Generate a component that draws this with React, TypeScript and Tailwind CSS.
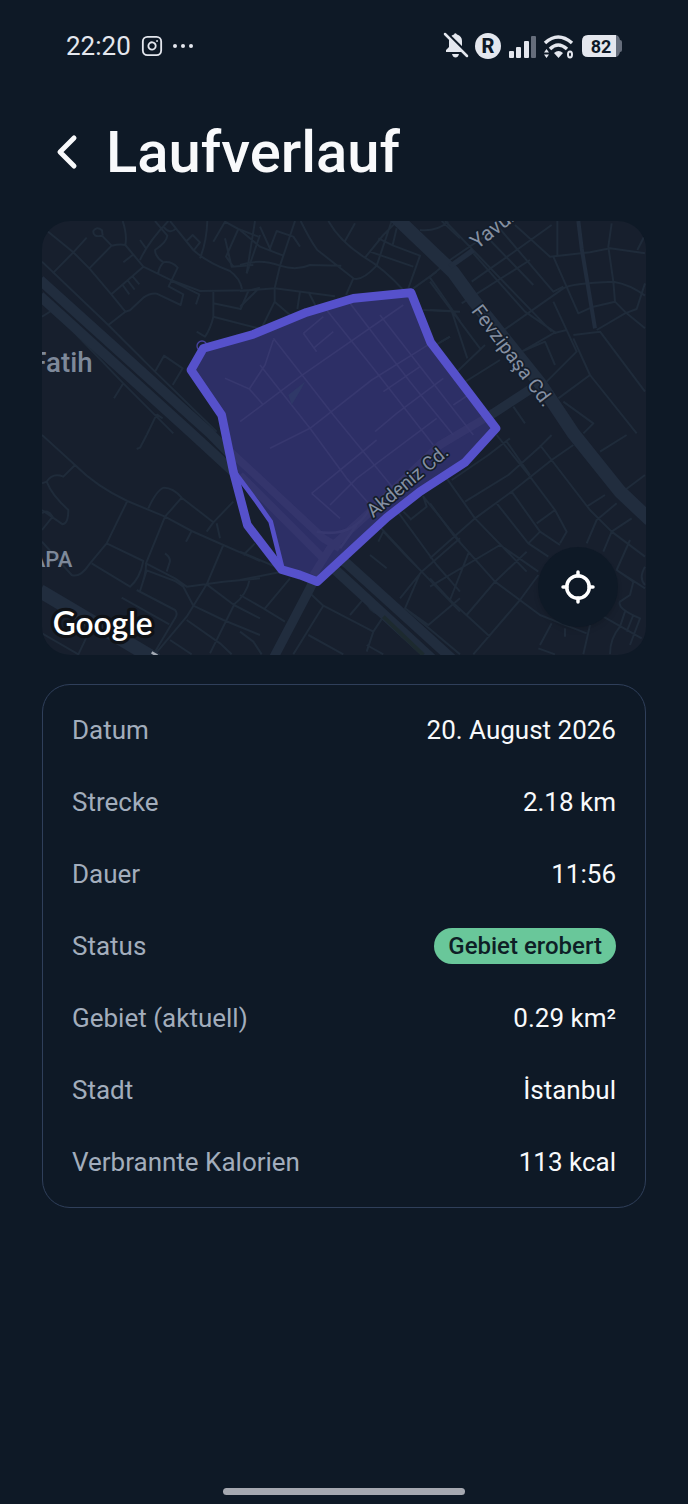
import type { ReactNode } from 'react';
import { Instagram } from 'lucide-react';

type Detail = {
  label: string;
  value: string;
  badge?: boolean;
};

const details: Detail[] = [
  { label: 'Datum', value: '20. August 2026' },
  { label: 'Strecke', value: '2.18 km' },
  { label: 'Dauer', value: '11:56' },
  { label: 'Status', value: 'Gebiet erobert', badge: true },
  { label: 'Gebiet (aktuell)', value: '0.29 km²' },
  { label: 'Stadt', value: 'İstanbul' },
  { label: 'Verbrannte Kalorien', value: '113 kcal' },
];

// Side streets, one path per map tile
const tiles = [
  {
    x: 0,
    y: 0,
    d: 'M18 45L100 112L148 160L214 238L256 290M38 175L100 112L140 68M148 160L215 92Q240 86 256 90Q262 60 248 18M215 92L186 62Q158 68 160 48Q170 32 186 46L188 62M256 90L310 155L390 194L480 228L630 226L660 218M300 135Q325 80 385 18M300 75L318 100M250 142L278 120M345 18L382 62Q380 82 345 105Q345 125 370 142Q355 160 355 175M370 142Q395 138 413 158L386 214L430 238L422 270L350 236Q330 234 310 248L270 286L256 290L205 330M214 238L310 155M248 210L268 238M262 195L284 224M276 182L298 208M392 196L478 238L468 268M390 18L460 105Q500 142 570 168Q600 190 606 222M440 78L458 60L480 82L462 105M480 130Q500 80 502 18M370 35Q390 60 408 40M520 80L555 20L595 42L655 65M555 70L575 155L640 150M595 42L558 125L580 155M660 60L620 175M520 230V305L655 340M520 265L602 282L625 228M520 305Q512 340 495 365L470 350M345 470L372 422L428 460L398 510M6 140L205 330L345 470L530 650M6 305L38 285M38 285L250 505L400 655M250 505L222 550M350 598L320 660M350 598L368 610',
  },
  {
    x: 600,
    y: 0,
    d: 'M0 150Q60 130 120 152Q170 168 210 150L304 152M45 18L20 175M0 45L60 95L130 122M60 35L92 105M90 100L110 48L160 65L180 95M165 18L120 152L104 220V260M0 228L104 220L285 244M0 275L55 222M104 260L62 345M104 260L150 300M62 345L100 370L68 450L25 520L0 505M182 18Q210 75 232 105L340 190Q365 200 410 152L455 18M265 18Q300 80 375 128Q430 160 490 225M345 25L315 78M340 190L318 240M375 128L430 60L470 20M415 70L460 92L540 122L505 220M390 110L520 155M470 40L458 90M180 230L172 282M205 230L230 278M540 45Q590 50 625 20M520 220L590 170M570 188L660 318M550 285L660 290M600 382L630 365M605 18L660 70',
  },
  {
    x: 1170,
    y: 0,
    d: 'M0 185L60 135L170 60M45 18L365 350M125 200L260 105L365 30M95 265L300 135M215 350L400 220Q420 205 550 200Q600 208 645 242M200 30L370 230L400 215M255 30L360 125L480 112L540 100L645 115M382 18V120M370 125L445 295L490 275L555 260L550 200L535 95L545 25M555 260L590 295L645 340M500 345L585 295L620 282L645 205M645 60L622 105M130 115L285 290L380 355M165 60L310 210M275 410L370 355L410 345M210 350L275 410L345 380L375 450M270 420L330 500M0 200L150 400M0 285L65 288L112 430M90 510L210 435M60 490L165 390M0 400L60 365M350 500L440 410L370 260M430 360L510 350L645 530M385 550L480 480L430 370M250 575L285 625M480 480L620 655M400 560L490 625L460 655',
  },
  {
    x: 0,
    y: 660,
    d: 'M6 0L105 90Q170 155 262 198L375 245L455 288L550 330L660 378M105 90L70 125Q38 112 20 140L6 145M20 140Q35 180 85 225Q85 265 68 268L6 225M6 235Q22 220 38 245L6 285M320 0L300 38L290 42M325 220Q350 165 372 158Q400 158 425 188L375 245L318 385L405 430L440 455L550 440L660 430M425 188L520 262L580 200M262 198L200 325L150 385Q120 430 95 420L6 320M200 325L310 378Q300 430 270 455L155 385M318 385Q320 410 300 468M300 468L320 406L405 438L430 455L460 512M550 330L500 448L440 545L345 658M455 288L438 320M375 355Q395 370 388 385L380 410M290 465L405 525Q415 535 405 550L345 650M245 488L388 568M460 512L550 555L660 600M500 448L582 510L660 550M582 510L510 655M630 430Q620 480 580 510M440 555L540 625L575 658M390 615L455 658M6 595L115 658L145 595M645 325L610 360M500 290L520 262M540 310L530 265',
  },
  {
    x: 600,
    y: 660,
    d: 'M0 350L130 405M0 435L125 410M0 480L70 520L135 560M75 520L150 430M210 475L250 512L400 590M250 512L160 658M205 600L310 658M400 590L430 545L372 490L330 540M375 490Q385 530 420 540M400 590L380 650M380 630L430 658M405 260L550 415L660 530M455 205L590 390L660 470M430 290L505 370L545 410L660 310M510 255L560 215L550 185L660 320M490 230L515 255M390 360L440 400M415 320L430 290M660 490L565 570L495 520L540 415M545 410L480 490M495 520L660 658M0 590L40 620L65 658',
  },
  {
    x: 1170,
    y: 660,
    d: 'M50 130L135 250L290 410M0 205L70 300L195 440L330 540L470 595M105 200L235 120L330 35L365 0M65 135L175 60L240 10M200 0L300 125L375 225L410 290L390 325M0 370L135 250L245 170L365 75L430 30M230 20L300 120M330 30L480 225L545 290L645 365M245 170L330 290L390 330M200 205L295 325L355 365M320 265L375 225M295 325L330 290M0 455L210 330L325 410M110 540L195 440L290 350M0 430L60 495L180 605M60 495L115 355M130 658L270 495L325 420M470 325L500 255L560 205M470 215L525 180M545 290L520 350M545 290L605 250M585 165L645 120M510 50L590 0M600 315L560 405L645 460M560 405L610 440L600 480L570 500Q560 520 630 550L600 630M520 545L635 610M585 530L570 575Q540 610 540 658M610 540L590 590M325 640L375 658M330 630L365 565M480 570L460 658M405 580V605M645 395Q625 430 645 450M0 620L40 658',
  },
];

// Streets seen through the captured area
const innerStreets =
  'M555 490L628 522L670 570M628 522L675 450L700 375M600 620L780 485L1090 270M660 450L810 640M700 370L880 600L1060 820M840 260L1000 460L1180 690M930 265L1110 500L1240 660M1020 300L1300 660M790 355L850 305M820 400L880 350M790 355L830 410M810 640L995 495L1180 380M1005 650L1070 595L1210 490M1030 530L1140 455M690 700L810 640M815 835L1010 675M870 870L950 790L1190 610M815 835L900 910M810 640L920 790L990 870M1240 570L1300 530';

const runPath =
  'M1113 233L1172 382L1368 640L1275 742L1140 830L1040 908L832 1100L780 1080L725 1064L622 930L580 770L545 600L453 465L490 400L640 358L800 292L940 250Z';
const areaPath =
  'M1113 233L1172 382L1368 640L1275 742L1140 830L1040 908L832 1100L780 1080L725 1064L692 920L650 860L580 770L545 600L453 465L490 400L640 358L800 292L940 250Z';

function MapLabel({ x, y, angle, size, children }: { x: number; y: number; angle: number; size: number; children: ReactNode }) {
  return (
    <text
      transform={`translate(${x} ${y}) rotate(${angle})`}
      fontSize={size}
      fill="#8590a2"
      stroke="#141d2a"
      strokeWidth={10}
      strokeLinejoin="round"
      paintOrder="stroke"
    >
      {children}
    </text>
  );
}

function RunMap() {
  return (
    <svg viewBox="6 18 1812 1302" preserveAspectRatio="xMidYMid slice" className="block w-full font-[Roboto,sans-serif]" role="img" aria-label="Karte">
      <clipPath id="area">
        <path d={areaPath} />
      </clipPath>
      <rect width="1900" height="1400" fill="#171f2d" />
      <g fill="none" stroke="#1f2b3a" strokeWidth="6" strokeLinejoin="round">
        {tiles.map((tile) => (
          <path key={`${tile.x}-${tile.y}`} d={tile.d} transform={`translate(${tile.x} ${tile.y})`} />
        ))}
      </g>

      {/* Main roads */}
      <g fill="none" stroke="#212d3e" strokeLinejoin="round">
        <path d="M0 1128L350 1335" strokeWidth="42" />
        <path d="M0 195L510 655L850 1000L920 1045L1240 1335" strokeWidth="30" />
        <path d="M0 243L455 655L640 825L870 1050L1180 1335" strokeWidth="30" />
        <path d="M1060 0L1170 105L1240 172L1300 255L1500 505L1600 655L1740 830L1830 915" strokeWidth="40" />
        <path d="M1475 520L1360 595L1200 690L980 900L870 1000L810 1120L700 1330" strokeWidth="28" />
        <path d="M1615 18L1625 100L1665 340" strokeWidth="12" />
        <path d="M1230 155L1300 105" strokeWidth="16" />
      </g>
      <path d="M1030 1205L1150 1320" stroke="#1d2a2f" strokeWidth="12" />

      {/* Captured area */}
      <path d={areaPath} fill="#2d2f66" />
      <g fill="none" stroke="#37386f" strokeLinejoin="round" clipPath="url(#area)">
        <path d={innerStreets} strokeWidth="5" />
        <path d="M560 700L850 970L900 1000M600 780L850 1030M1360 595L1200 690L980 900L870 1000L820 1080" strokeWidth="24" opacity="0.7" />
        <path d="M830 950Q940 970 990 880M900 1000L950 930" strokeWidth="8" />
      </g>
      <path d="M745 540L795 500L785 520L755 570Z" fill="#2f3868" />
      <circle cx="486" cy="393" r="15" fill="none" stroke="#4743a0" strokeWidth="4" />
      <path d="M583 770L650 860L692 920L728 1064" fill="none" stroke="#5550c8" strokeWidth="14" strokeLinejoin="round" />
      <path d={runPath} fill="none" stroke="#5651cb" strokeWidth="26" strokeLinejoin="round" />

      <MapLabel x={1312} y={104} angle={-38} size={62}>Yavuz</MapLabel>
      <MapLabel x={1292} y={288} angle={53} size={59}>Fevzipaşa Cd.</MapLabel>
      <MapLabel x={1000} y={910} angle={-40} size={57}>Akdeniz Cd.</MapLabel>
      <g fill="#7e899a" fontWeight="500">
        <text x="-26" y="471" fontSize="83">Fatih</text>
        <text x="-28" y="1056" fontSize="66">APA</text>
      </g>
      <path d="M335 1312L352 1322" stroke="#a4abb5" strokeWidth="8" />
      <text
        x="38"
        y="1259"
        fontSize="95"
        className="font-[Lato,sans-serif]"
        fontWeight="600"
        fill="#ffffff"
        stroke="#0f1217"
        strokeWidth="20"
        strokeLinejoin="round"
        paintOrder="stroke"
      >
        Google
      </text>
    </svg>
  );
}

function StatusBar() {
  return (
    <div className="flex h-7 items-center justify-between px-6 text-[#e4e7ee]">
      <div className="flex items-center gap-[10px]">
        <span className="font-[Roboto,sans-serif] text-[26px] leading-7">22:20</span>
        <Instagram size={22} strokeWidth={2} />
        <svg width="20" height="6" viewBox="0 0 20 6" fill="currentColor">
          <circle cx="2" cy="3" r="2" />
          <circle cx="10" cy="3" r="2" />
          <circle cx="18" cy="3" r="2" />
        </svg>
      </div>
      <svg width="180" height="28" viewBox="0 0 180 28" className="font-[Roboto,sans-serif]" fill="currentColor">
        {/* Muted bell */}
        <path d="M4 20V18L7 15V9Q7 4 12 2.5Q13 0 15 2.5Q20 4 20 9V15L23 18V20Z" />
        <path d="M10 22H17Q16 25.500 13.500 25.500Q11 25.500 10 22Z" />
        <path d="M4.500 1L27 23" stroke="#0e1926" strokeWidth="3" />
        <path d="M3 2L25 24" stroke="currentColor" strokeWidth="2.5" strokeLinecap="round" />
        {/* Registered network */}
        <circle cx="46" cy="14" r="13" />
        <text x="46" y="21" textAnchor="middle" fontSize="20" fontWeight="800" fill="#0e1926">R</text>
        {/* Signal */}
        <rect x="67" y="19" width="5" height="7" rx="1" />
        <rect x="74" y="15" width="5" height="11" rx="1" />
        <rect x="82" y="9" width="5" height="17" rx="1" />
        <rect x="89" y="4" width="5" height="22" rx="1" fill="#656d7b" />
        {/* Wifi */}
        <g fill="none" stroke="currentColor" strokeWidth="3.5">
          <path d="M103 11Q116 -1 130 11" />
          <path d="M108 17Q116 9 125 17" />
        </g>
        <path d="M112 21Q116.500 17 121 21L116.500 26Z" />
        <path d="M102 20.500L104.500 17L107 20.500ZM102 22.500L104.500 26L107 22.500Z" />
        <ellipse cx="128" cy="22.500" rx="2" ry="3" fill="none" stroke="currentColor" strokeWidth="2" />
        {/* Battery */}
        <path d="M172 3H173Q177 3 178 8Q180 8 180 10V18Q180 20 178 20Q177 25 173 25H172Z" fill="#656d7b" />
        <path d="M146 3H174V25H146Q140 25 140 19V9Q140 3 146 3Z" />
        <text x="159" y="21" textAnchor="middle" fontSize="18" fontWeight="700" fill="#0e1926">82</text>
      </svg>
    </div>
  );
}

export default function App() {
  return (
    <div className="flex min-h-screen flex-col bg-[#0e1926] px-[42px] pt-8 pb-[9px] font-[Roboto,sans-serif] text-white">
      <StatusBar />

      <header className="mt-14 flex h-[72px] items-center gap-7">
        <button type="button" aria-label="Zurück" className="flex w-9 justify-end">
          <svg width="24" height="36" viewBox="0 0 24 36" fill="none" stroke="#f8f9fb" strokeWidth="5" strokeLinecap="round" strokeLinejoin="round">
            <path d="M20 4L6 18L20 32" />
          </svg>
        </button>
        <h1 className="text-[58px] leading-[72px] font-medium text-[#f8f9fb]">Laufverlauf</h1>
      </header>

      <section className="relative mt-[33px] overflow-hidden rounded-[28px]">
        <RunMap />
        <button
          type="button"
          aria-label="Standort"
          className="absolute right-7 bottom-7 flex size-20 items-center justify-center rounded-full bg-[#0e1926] shadow-md"
        >
          <svg width="36" height="36" viewBox="0 0 36 36" fill="none" stroke="#ffffff" strokeWidth="3.5" strokeLinecap="round">
            <circle cx="18" cy="18" r="11.300" />
            <path d="M18 3V7M18 29V33M3 18H7M29 18H33" />
          </svg>
        </button>
      </section>

      <dl className="mt-[29px] flex flex-col gap-9 rounded-[28px] border border-[#2f3f5a] px-[29px] py-[27px] text-[26px] leading-9">
        {details.map((item) => (
          <div key={item.label} className="flex h-9 items-center justify-between">
            <dt className="text-[#a2adbc]">{item.label}</dt>
            {item.badge ? (
              <dd className="rounded-full bg-[#69c79a] px-[14px] text-[24px] font-medium text-[#0e1f26]">{item.value}</dd>
            ) : (
              <dd className="text-[#f8f9fb]">{item.value}</dd>
            )}
          </div>
        ))}
      </dl>

      <div className="mx-auto mt-auto h-[7px] w-2/5 rounded-full bg-[#a5a8b0]" />
    </div>
  );
}
